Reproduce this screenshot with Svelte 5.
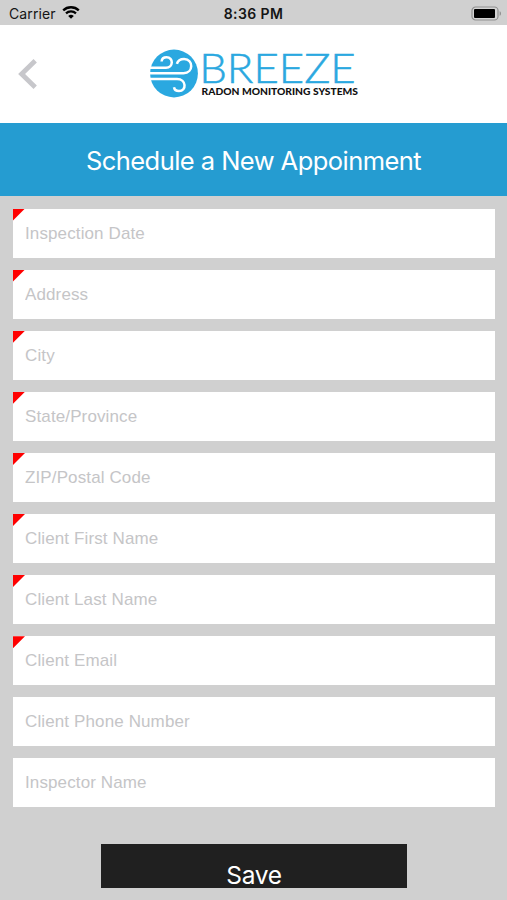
<script>
  const fields = [
    { name: 'inspectionDate', label: 'Inspection Date', required: true },
    { name: 'address', label: 'Address', required: true },
    { name: 'city', label: 'City', required: true },
    { name: 'state', label: 'State/Province', required: true },
    { name: 'zip', label: 'ZIP/Postal Code', required: true },
    { name: 'firstName', label: 'Client First Name', required: true },
    { name: 'lastName', label: 'Client Last Name', required: true },
    { name: 'email', label: 'Client Email', required: true },
    { name: 'phone', label: 'Client Phone Number', required: false },
    { name: 'inspector', label: 'Inspector Name', required: false }
  ];

  let values = $state({});
</script>

<div class="screen">
  <div class="status-bar">
    <div class="carrier">
      <span>Carrier</span>
      <svg class="wifi" width="18" height="14" viewBox="0 0 18 14">
        <path d="M1.2 5.4a11.2 11.2 0 0 1 15.6 0" fill="none" stroke="#000" stroke-width="2.3" />
        <path d="M4 8.4a7.2 7.2 0 0 1 10 0" fill="none" stroke="#000" stroke-width="2.2" />
        <path d="M9 13.8 6.2 11a4 4 0 0 1 5.6 0z" />
      </svg>
    </div>
    <span class="time">8:36 PM</span>
    <svg class="battery" width="31" height="15" viewBox="0 0 31 15">
      <rect x="1" y="1" width="26" height="13" rx="3.6" fill="#d4d4d4" stroke="#8f8f8f" stroke-width="1.2" />
      <rect x="3" y="3" width="21" height="9" rx="1" />
      <path d="M28.6 5.2c1.9.7 1.9 3.9 0 4.6z" fill="#8f8f8f" />
    </svg>
  </div>

  <header class="header">
    <button class="back" aria-label="Back">
      <svg width="20" height="30" viewBox="0 0 20 30" fill="none" stroke="#c7c7cb" stroke-width="4.8">
        <path d="M17.2 1.8 3.6 15l13.6 13.2" />
      </svg>
    </button>
    <svg class="logo" width="212" height="52" viewBox="0 0 212 52">
      <circle cx="26" cy="25.5" r="23.9" fill="#2aa8e0" />
      <g fill="none" stroke="#fff" stroke-width="2.5">
        <path d="M1 19.7h17c7.6 0 7.6-10.4.6-10.4-3 0-4.8 1.6-5 4.2" />
        <path d="M0 25.2h35.5c10.2 0 10.2-14.2.6-14.2-4 0-6.4 2-7.2 4.8" />
        <path d="M0 30.9h29c9.6 0 9.8 12.2 2 12.2-2.8 0-4.6-1.4-5-3.8" />
      </g>
      <text class="brand" x="51.2" y="35" textLength="156.5" lengthAdjust="spacingAndGlyphs">BREEZE</text>
      <text class="tagline" x="53.6" y="46.6" textLength="156.4" lengthAdjust="spacingAndGlyphs">RADON MONITORING SYSTEMS</text>
    </svg>
  </header>

  <h1 class="title">Schedule a New Appoinment</h1>

  <form class="form">
    {#each fields as field (field.name)}
      <div class="field" class:required={field.required}>
        <input
          type="text"
          placeholder={field.label}
          aria-label={field.label}
          bind:value={values[field.name]}
        />
      </div>
    {/each}

    <button type="button" class="save">Save</button>
  </form>
</div>

<style>
  :global(body) {
    margin: 0;
  }

  .screen {
    display: flex;
    flex-direction: column;
    width: 100%;
    height: 900px;
    overflow: hidden;
    background: #d0d0d0;
    font-family: Inter, 'Liberation Sans', sans-serif;
  }

  .status-bar {
    display: grid;
    grid-template-columns: 1fr auto 1fr;
    align-items: center;
    box-sizing: border-box;
    height: 25px;
    padding: 2px 5px 0 9px;
    color: #151515;
    font-size: 14px;
    line-height: 20px;
  }

  .carrier {
    display: flex;
    align-items: center;
    gap: 6px;
    letter-spacing: 0.1px;
  }

  .wifi {
    margin-top: -3px;
  }

  .time {
    margin-right: 4px;
    font-weight: 600;
    letter-spacing: 0.4px;
  }

  .battery {
    justify-self: end;
  }

  .header {
    display: grid;
    grid-template-columns: 148px 1fr;
    height: 98px;
    background: #fff;
  }

  .back {
    display: flex;
    align-items: center;
    padding: 0 0 0 18px;
    border: 0;
    background: none;
  }

  .logo {
    margin-top: 23px;
    overflow: visible;
  }

  .brand {
    font-family: Lato, sans-serif;
    font-size: 41px;
    font-weight: 300;
    fill: #2aa8e0;
    stroke: #2aa8e0;
    stroke-width: 0.5px;
  }

  .tagline {
    font-family: Lato, sans-serif;
    font-size: 9.5px;
    font-weight: 900;
    fill: #111;
  }

  .title {
    box-sizing: border-box;
    height: 73px;
    margin: 0;
    padding-top: 1px;
    background: #259cd1;
    color: #fff;
    font-size: 25.5px;
    font-weight: 400;
    letter-spacing: -0.55px;
    line-height: 73px;
    text-align: center;
  }

  .form {
    display: flex;
    flex-direction: column;
    gap: 12px;
    padding: 12.5px 12px 0 13px;
  }

  .field {
    position: relative;
    height: 49.1px;
    background: #fff;
  }

  /* red corner on mandatory fields */
  .required::before {
    content: '';
    position: absolute;
    top: 0;
    left: 0;
    width: 12px;
    height: 12px;
    background: #f00;
    clip-path: polygon(0 0, 100% 0, 0 100%);
  }

  input {
    box-sizing: border-box;
    width: 100%;
    height: 100%;
    padding: 1px 12px 0;
    border: 0;
    background: none;
    font-family: 'Liberation Sans', Arial, sans-serif;
    font-size: 17px;
    letter-spacing: 0.12px;
    outline: none;
  }

  input::placeholder {
    color: #c5c5c7;
    opacity: 1;
  }

  .save {
    align-self: center;
    width: 306px;
    height: 44px;
    margin-top: 24.6px;
    padding: 18px 0 0;
    border: 0;
    background: #202020;
    color: #fff;
    font-family: inherit;
    font-size: 24.5px;
    letter-spacing: -0.3px;
    line-height: 26px;
  }
</style>
